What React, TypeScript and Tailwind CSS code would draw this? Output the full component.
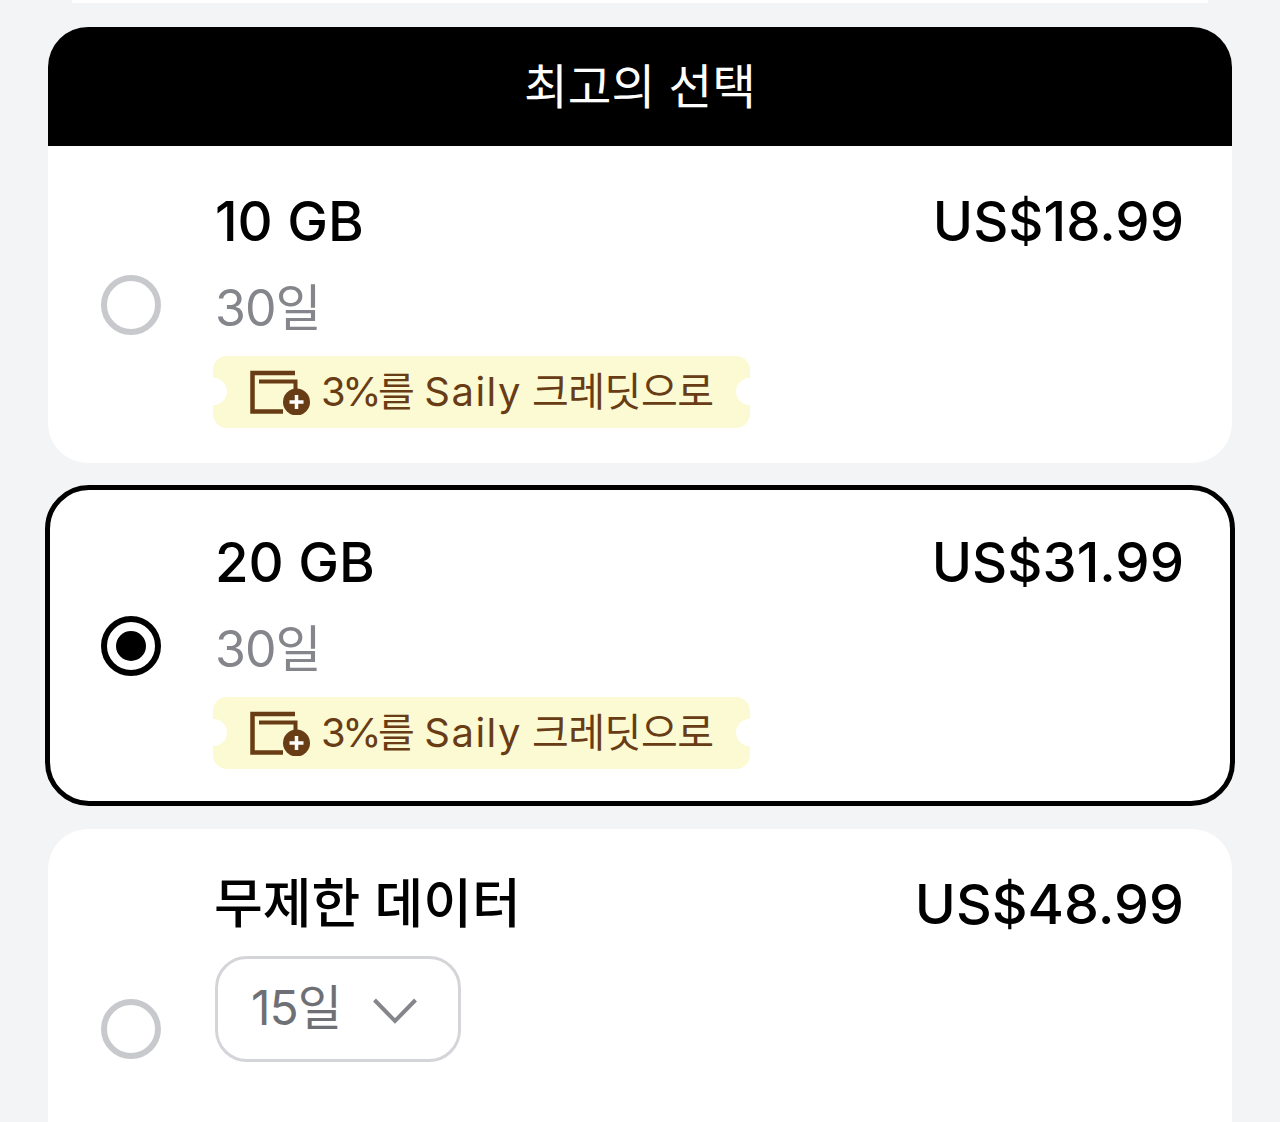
const FONT = "font-['Inter','Noto_Sans_CJK_KR',sans-serif]";

function CreditIcon() {
  return (
    <svg width="60" height="46" viewBox="0 0 60 46" className="shrink-0">
      <path d="M45 4H2.5V42.5H33" fill="none" stroke="#683c15" strokeWidth="4.5" />
      <path d="M9 12.5H45.5V22" fill="none" stroke="#683c15" strokeWidth="4" />
      <circle cx="46.5" cy="33" r="13.5" fill="#683c15" />
      <path d="M46.5 26V40M39.5 33H53.5" stroke="#fff" strokeWidth="3.5" />
    </svg>
  );
}

function CreditBadge() {
  return (
    <div className="relative mt-[20px] -ml-[2px] flex h-[72px] w-[537px] items-center gap-[11px] rounded-[14px] bg-[#fcfad2] pl-[37px] text-[40px] text-[#683c15]">
      <span className="absolute -left-[13px] top-[22px] h-[27px] w-[27px] rounded-full bg-white" />
      <span className="absolute -right-[13px] top-[22px] h-[27px] w-[27px] rounded-full bg-white" />
      <CreditIcon />
      <span className="whitespace-nowrap leading-none">
        <span className="tracking-[-3.5px]">3%를</span>
        <span className="ml-[13px] tracking-[1.5px]">Saily</span>
        <span className="ml-[10px] tracking-[-0.5px]">크레딧으로</span>
      </span>
    </div>
  );
}

function Radio({ checked }: { checked?: boolean }) {
  return (
    <div
      className={`flex h-[60px] w-[60px] shrink-0 items-center justify-center rounded-full border-[6px] ${
        checked ? 'border-black' : 'border-[#c8c9cc]'
      }`}
    >
      {checked && <div className="h-[30px] w-[30px] rounded-full bg-black" />}
    </div>
  );
}

function PlanRow({ title, price, days }: { title: string; price: string; days: string }) {
  return (
    <div className="min-w-0 flex-1 self-start">
      <div className="flex items-center justify-between text-[54.5px] font-medium leading-[60px] text-black">
        <span>{title}</span>
        <span>{price}</span>
      </div>
      <div className="mt-[29px] text-[50px] leading-[56px] tracking-[-1px] text-[#85868b]">{days}</div>
      <CreditBadge />
    </div>
  );
}

export default function App() {
  return (
    <div className={`h-[1122px] w-[1280px] overflow-hidden bg-[#f3f4f6] ${FONT}`}>
      <div className="mx-[72px] h-[3px] bg-white" />

      {/* 최고의 선택 */}
      <div className="mx-[48px] mt-[24px] flex h-[119px] items-center justify-center rounded-t-[40px] bg-black text-[47.5px] leading-none text-white">
        최고의 선택
      </div>
      <div className="mx-[48px] flex h-[317px] rounded-b-[40px] bg-white pl-[53px] pr-[48px] pt-[45px]">
        <div className="-mt-[45px] flex items-center">
          <Radio />
        </div>
        <div className="ml-[54px] flex-1">
          <PlanRow title="10 GB" price="US$18.99" days="30일" />
        </div>
      </div>

      <div className="mx-[45px] mt-[22px] flex h-[321px] rounded-[44px] border-[5px] border-black bg-white pl-[51px] pr-[46px] pt-[42px]">
        <div className="-mt-[42px] flex items-center">
          <Radio checked />
        </div>
        <div className="ml-[54px] flex-1">
          <PlanRow title="20 GB" price="US$31.99" days="30일" />
        </div>
      </div>

      <div className="mx-[48px] mt-[23px] flex h-[400px] rounded-[40px] bg-white pl-[53px] pr-[48px] pt-[45px]">
        <div className="-mt-[45px] flex items-center">
          <Radio />
        </div>
        <div className="ml-[54px] flex-1">
          <div className="flex items-center justify-between font-medium leading-[60px] text-black">
            <span className="-ml-[1px] text-[53px]">무제한 데이터</span>
            <span className="text-[55.5px]">US$48.99</span>
          </div>
          <div className="mt-[22px] flex h-[106px] w-[246px] items-center gap-[31px] rounded-[32px] border-[3px] border-[#d4d5d8] pl-[33px] text-[48px] leading-none tracking-[-1px] text-[#6f7075]">
            <span className="-mt-[2px]">15일</span>
            <svg width="46" height="30" viewBox="0 0 46 30" fill="none" className="mt-[4px]">
              <path d="M2.5 4L23 25L43.5 4" stroke="#85868b" strokeWidth="4" />
            </svg>
          </div>
        </div>
      </div>
    </div>
  );
}
